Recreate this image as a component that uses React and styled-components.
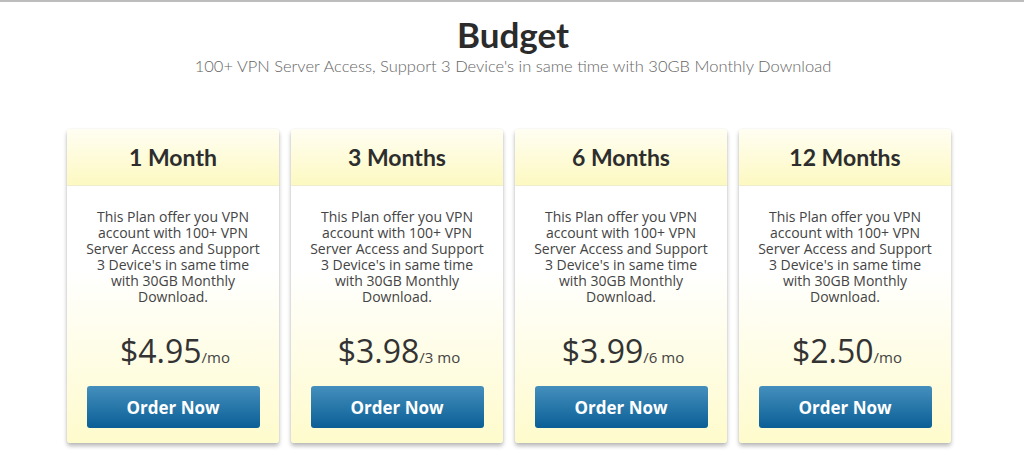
import React from 'react';
import styled, { createGlobalStyle } from 'styled-components';

const GlobalStyle = createGlobalStyle`
    body {
        margin: 0;
        background: #fff;
        font-family: "Open Sans", "Liberation Sans", sans-serif;
    }
`;

const Page = styled.div`
    width: 1024px;
    height: 474px;
    border-top: 2px solid #bdbdbd;
    box-sizing: border-box;
    overflow: hidden;
`;

const Heading = styled.div`
    text-align: center;
    padding-top: 12px;
    padding-left: 2px;
`;

const Title = styled.h1`
    margin: 0;
    font-family: "Lato", "Open Sans", sans-serif;
    font-weight: 700;
    font-size: 35px;
    line-height: 40px;
    color: #2b2b2b;
`;

const Subtitle = styled.p`
    margin: 2px 0 0;
    font-family: "Lato", "Open Sans", sans-serif;
    font-weight: 300;
    font-size: 16.5px;
    line-height: 20px;
    color: #666;
`;

const Plans = styled.div`
    display: flex;
    gap: 12px;
    margin-top: 53px;
    padding-left: 67px;
`;

const Card = styled.div`
    width: 212px;
    height: 314px;
    display: flex;
    flex-direction: column;
    border-radius: 3px;
    background: linear-gradient(to bottom, #ffffff 0%, #ffffff 45%, #fefbcc 100%);
    box-shadow: 0 3px 4px rgba(0, 0, 0, 0.28), 0 0 1px rgba(0, 0, 0, 0.18);
`;

const CardHead = styled.div`
    height: 56px;
    display: flex;
    align-items: center;
    justify-content: center;
    border-bottom: 1px solid #efeccc;
    border-radius: 3px 3px 0 0;
    background: linear-gradient(to bottom, #fffef2 0%, #fdf9c2 100%);
    font-family: "Lato", "Open Sans", sans-serif;
    font-weight: 700;
    font-size: 23px;
    color: #2d2d2d;
`;

const Description = styled.p`
    margin: 23px 0 0;
    padding: 0 16px;
    text-align: center;
    font-size: 14px;
    line-height: 16px;
    color: #444;
`;

const Price = styled.div`
    margin-top: auto;
    text-align: center;
    font-size: 32px;
    line-height: 36px;
    color: #333;
    padding-left: 4px;
`;

const Per = styled.span`
    font-size: 15px;
    color: #444;
`;

const OrderButton = styled.button`
    align-self: center;
    margin: 11px 0 15px;
    width: 173px;
    height: 42px;
    border: none;
    border-radius: 3px;
    background: linear-gradient(to bottom, #458fbd 0%, #0a5f96 100%);
    color: #fff;
    font-family: "Open Sans", sans-serif;
    font-weight: 700;
    font-size: 17px;
    cursor: pointer;
`;

const plans = [
    { name: '1 Month', price: '$4.95', per: '/mo' },
    { name: '3 Months', price: '$3.98', per: '/3 mo' },
    { name: '6 Months', price: '$3.99', per: '/6 mo' },
    { name: '12 Months', price: '$2.50', per: '/mo' },
];

function App() {
    return (
        <Page>
            <GlobalStyle />
            <Heading>
                <Title>Budget</Title>
                <Subtitle>100+ VPN Server Access, Support 3 Device's in same time with 30GB Monthly Download</Subtitle>
            </Heading>

            <Plans>
                {plans.map(plan => (
                    <Card key={plan.name}>
                        <CardHead>{plan.name}</CardHead>
                        <Description>
                            This Plan offer you VPN account with 100+ VPN Server Access and Support 3 Device's in same time with 30GB Monthly Download.
                        </Description>
                        <Price>{plan.price}<Per>{plan.per}</Per></Price>
                        <OrderButton>Order Now</OrderButton>
                    </Card>
                ))}
            </Plans>
        </Page>
    );
}

export default App;
